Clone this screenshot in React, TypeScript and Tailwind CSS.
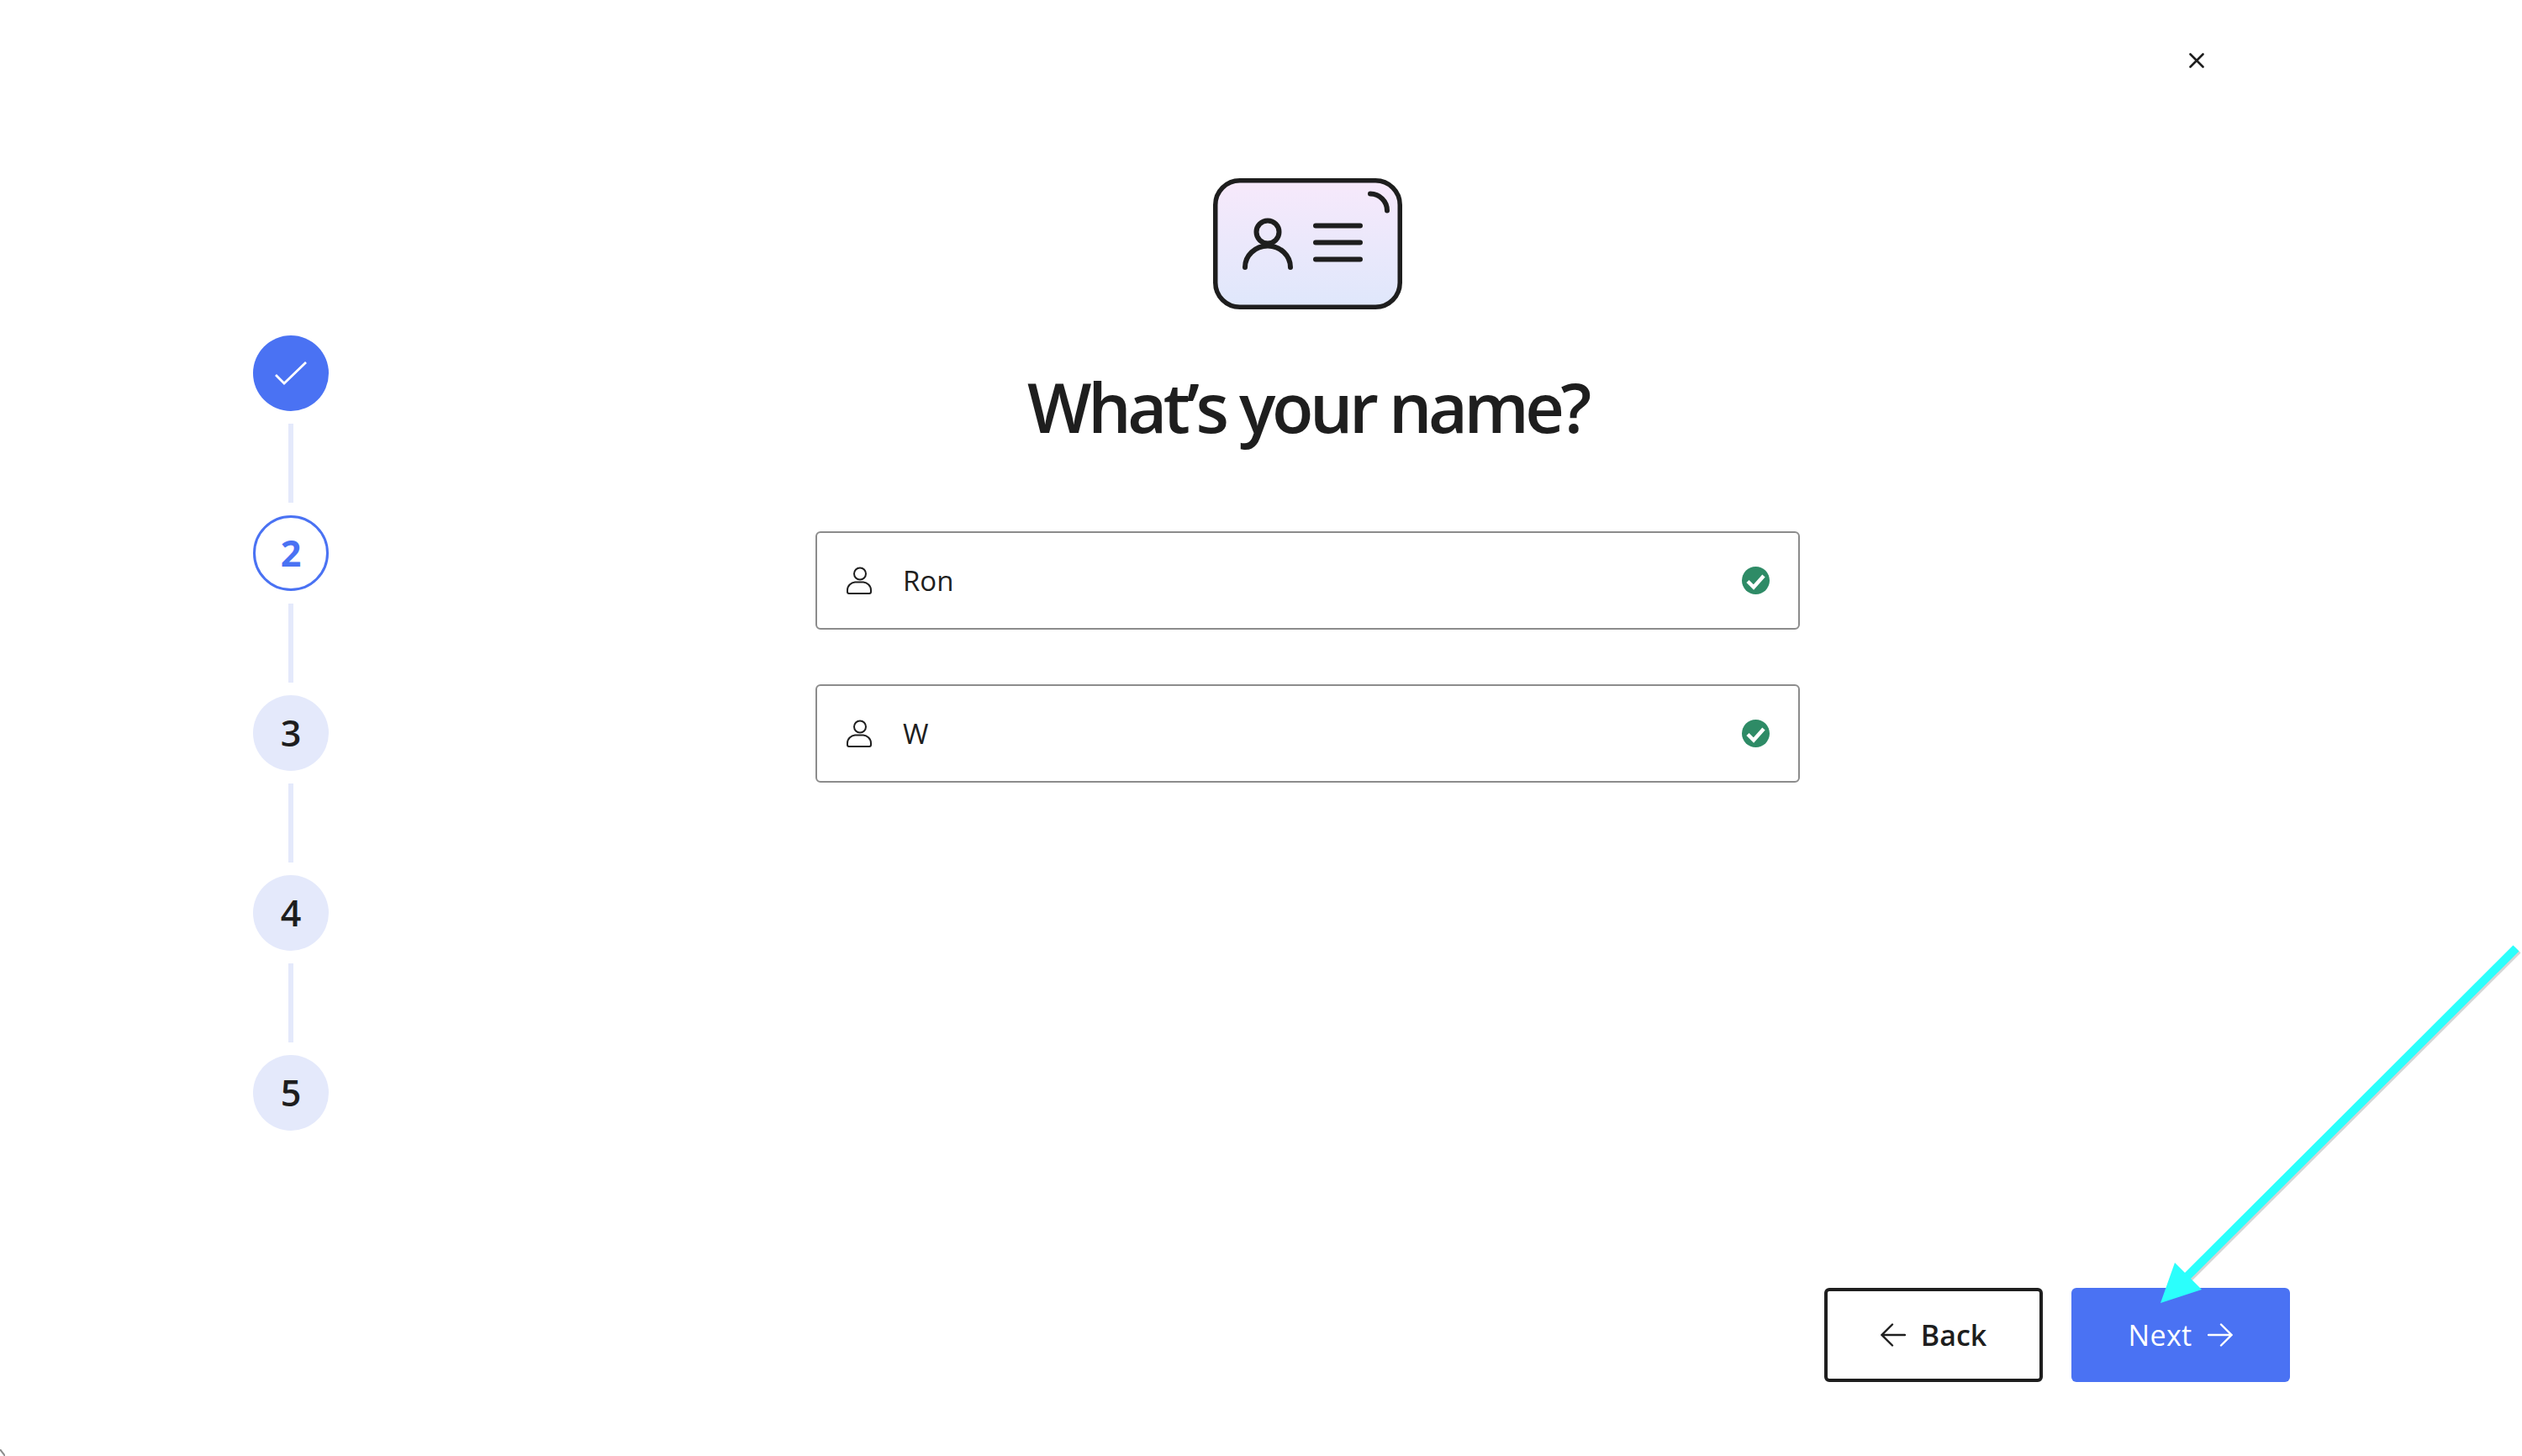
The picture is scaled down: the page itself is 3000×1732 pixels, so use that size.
const STEPS = [3, 4, 5];

function StepLine() {
  return <div className="my-[15px] h-[94px] w-[6px] bg-[#e4e9fb]" />;
}

function PersonIcon() {
  return (
    <svg width="30" height="33" viewBox="0 0 30 33" fill="none" stroke="#1e1e1e" strokeWidth="2" className="shrink-0">
      <circle cx="16" cy="8.5" r="7" />
      <path d="M3 32H27a2 2 0 0 0 2-2v-2c0-6-5-9-9-9.5H10c-4 .5-9 3.5-9 9.5v2a2 2 0 0 0 2 2z" />
    </svg>
  );
}

function NameField({ value }: { value: string }) {
  return (
    <div className="flex h-[117px] w-full items-center rounded-[6px] border-2 border-[#8c8c8c] pl-[35px] pr-[34px]">
      <PersonIcon />
      <span className="ml-[37px] flex-1 text-[33px] text-[#1e1e1e]">{value}</span>
      <svg width="33" height="33" viewBox="0 0 33 33" className="shrink-0">
        <circle cx="16.5" cy="16.5" r="16.5" fill="#2e8b66" />
        <path d="M7 17.5l7 7L26 11" fill="none" stroke="#fff" strokeWidth="4.5" />
      </svg>
    </div>
  );
}

function CardIcon() {
  return (
    <svg width="225" height="156" viewBox="0 0 225 156" fill="none" stroke="#1e1e1e" strokeWidth="6" strokeLinecap="round">
      <defs>
        <linearGradient id="card" x1="0" y1="0" x2="0" y2="1">
          <stop offset="0" stopColor="#f7e9fb" />
          <stop offset="1" stopColor="#dfe7fb" />
        </linearGradient>
      </defs>
      <rect x="2.75" y="2.75" width="219.5" height="150.5" rx="29" strokeWidth="5.5" fill="url(#card)" />
      <circle cx="65" cy="64" r="13.5" />
      <path d="M38 106c0-14 12-25.5 27-25.5s27 11.500 27 25.500" />
      <path d="M122 56.500H175M122 76.500H175M122 96.500H175" />
      <path d="M187 18.500c11 0 20 9 20 20" />
    </svg>
  );
}

export default function App() {
  return (
    <div className="relative flex h-[1732px] w-[3000px] overflow-hidden bg-white font-['Open_Sans',sans-serif] text-[#1e1e1e]">
      <aside className="flex w-[970px] shrink-0 flex-col items-start pl-[301px] pt-[399px]">
        <div className="flex w-[90px] flex-col items-center">
          <div className="flex h-[90px] w-[90px] items-center justify-center rounded-full bg-[#4a72f3]">
            <svg width="38" height="28" viewBox="0 0 38 28" fill="none" stroke="#fff" strokeWidth="2.8">
              <path d="M1 16l10 10L37 1" />
            </svg>
          </div>
          <StepLine />
          <div className="flex h-[90px] w-[90px] items-center justify-center rounded-full border-[3.5px] border-[#4a72f3] text-[43px] font-bold text-[#4a72f3]">
            2
          </div>
          {STEPS.map((step) => (
            <div key={step} className="flex flex-col items-center">
              <StepLine />
              <div className="flex h-[90px] w-[90px] items-center justify-center rounded-full bg-[#e4e9fb] text-[43px] font-semibold">
                {step}
              </div>
            </div>
          ))}
        </div>
      </aside>

      <main className="flex w-[1171px] shrink-0 flex-col items-center pt-[212px]">
        <CardIcon />
        <h1 className="mt-[54px] h-[124px] text-[81px] font-semibold leading-[124px] tracking-[-0.055em]">
          What’s your name?
        </h1>
        <div className="mt-[86px] flex w-full flex-col gap-[65px]">
          <NameField value="Ron" />
          <NameField value="W" />
        </div>
      </main>

      <div className="flex flex-1 flex-col justify-between pb-[88px] pl-[29px] pt-[63px]">
        <button type="button" className="ml-[434px] w-[18px]">
          <svg width="18" height="18" viewBox="0 0 18 18" fill="none" stroke="#1e1e1e" strokeWidth="2.6" strokeLinecap="round">
            <path d="M1.500 1.500l15 15M16.500 1.500l-15 15" />
          </svg>
        </button>
        <div className="flex gap-[34px]">
          <button type="button" className="flex h-[112px] w-[260px] items-center justify-center gap-[18px] rounded-[6px] border-4 border-[#1e1e1e] text-[34px] font-semibold">
            <svg width="30" height="28" viewBox="0 0 30 28" fill="none" stroke="#1e1e1e" strokeWidth="2.4" strokeLinecap="round">
              <path d="M29 14H2M14 1.500L1.500 14 14 26.500" />
            </svg>
            Back
          </button>
          <button type="button" className="flex h-[112px] w-[260px] items-center justify-center gap-[19px] rounded-[6px] bg-[#4a72f3] text-[34px] font-medium tracking-[0.01em] text-white">
            Next
            <svg width="30" height="28" viewBox="0 0 30 28" fill="none" stroke="#fff" strokeWidth="2.4" strokeLinecap="round">
              <path d="M1 14H28M16 1.500L28.500 14 16 26.500" />
            </svg>
          </button>
        </div>
      </div>

      {/* annotation arrow drawn over the screenshot */}
      <svg className="absolute left-[2560px] top-[1120px]" width="440" height="440" viewBox="0 0 440 440" fill="none">
        <path d="M433 8L40 400" stroke="#b9b9b9" strokeWidth="10" transform="translate(2 2)" opacity="0.6" />
        <path d="M433 8L40 400" stroke="#2bfffc" strokeWidth="10" />
        <path d="M10 430L27 382L59 414Z" fill="#2bfffc" />
      </svg>

      <svg className="absolute bottom-0 left-0" width="6" height="8" viewBox="0 0 6 8" fill="none" stroke="#8c8c8c" strokeWidth="2">
        <path d="M0 0L6 8" />
      </svg>
    </div>
  );
}
